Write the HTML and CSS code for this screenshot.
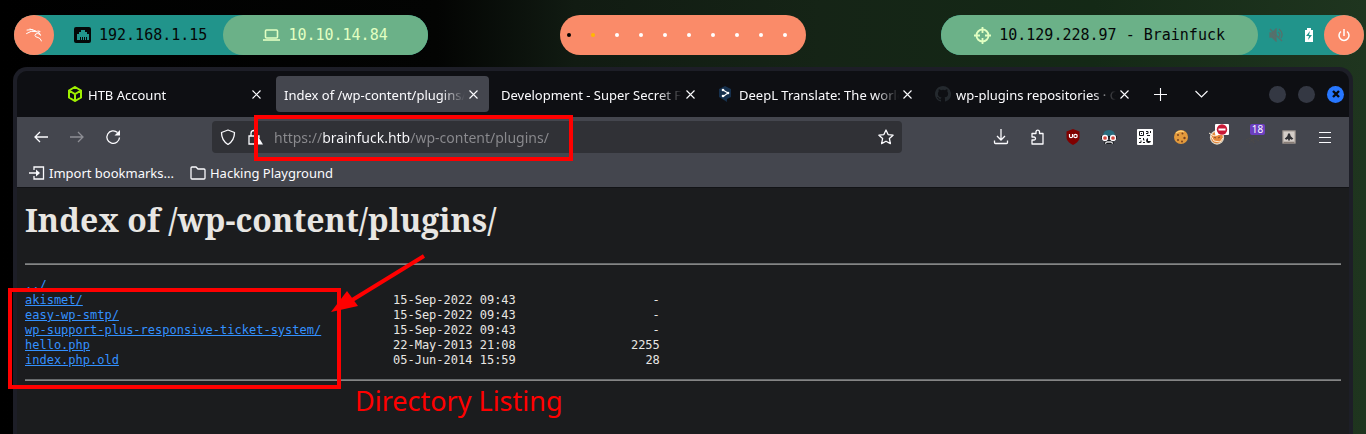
FILE: index.html
```html
<!DOCTYPE html>
<html lang="en">
<head>
<meta charset="utf-8">
<title>Index of /wp-content/plugins/</title>
<link rel="stylesheet" href="styles.css">
</head>
<body>
<header class="panel">
  <div class="group group-left">
    <button class="round" aria-label="Menu"><svg width="16" height="14" viewBox="0 0 16 14" fill="none" stroke="#fff" stroke-linecap="round"><path d="M1 2q5-1.500 9 1M.5 5.500Q5 2 10 3.500M4 1l3 1M10 3.500q4 0 4.500 3.500M14.500 7q-1.500-1.500-3-1.500-2.500 0-2.500 2 0 1.500 3 2 2.500.5 3.500 3.500M12 3l2 .5"/></svg></button>
    <span class="net"><svg width="17" height="16" viewBox="0 0 17 16"><rect width="17" height="16" rx="2" fill="#050808"/><path d="M3 13V7h2V5h2V3h4v2h2v2h2v6h-2v-3h-1v3h-1v-3h-1v3H9v-3H8v3H7v-3H6v3z" fill="#21948b"/></svg>192.168.1.15</span>
    <span class="pill vpn"><svg width="17" height="12" viewBox="0 0 17 12" fill="none" stroke="#e2ffc2" stroke-width="1.600"><rect x="2.500" y="1" width="12" height="8" rx="1"/><path d="M0 11h17"/></svg>10.10.14.84</span>
  </div>
  <div class="spaces"><i class="dot current"></i><i class="dot used"></i><i class="dot"></i><i class="dot"></i><i class="dot"></i><i class="dot"></i><i class="dot"></i><i class="dot"></i><i class="dot"></i><i class="dot"></i></div>
  <div class="group group-right">
    <span class="pill target"><svg width="17" height="17" viewBox="0 0 17 17" fill="none" stroke="#e2ffc2" stroke-width="1.800"><circle cx="8.500" cy="8.500" r="6"/><path d="M8.500 0v6M8.500 11v6M0 8.500h6M11 8.500h6"/></svg>10.129.228.97 - Brainfuck</span>
    <span class="status">
      <svg width="14" height="14" viewBox="0 0 14 14" fill="none" stroke="#55706c" stroke-width="1.300"><path d="M1 5h2l4-4v12L3 9H1z" fill="#55706c"/><path d="M1 1l12 12M9 4q3 2 1 5M10 1q5 4 2 9"/></svg>
      <svg width="8" height="14" viewBox="0 0 8 14"><path d="M0 2h2V0h4v2h2v12H0z" fill="#fff"/><path d="M5 3L1 8h3l-1 4 4-5H4z" fill="#21948b"/></svg>
    </span>
    <button class="round" aria-label="Power"><svg width="12" height="13" viewBox="0 0 12 13" fill="none" stroke="#fff" stroke-width="1.500"><path d="M6 0v7M3 2.500a5 5 0 1 0 6 0"/></svg></button>
  </div>
</header>

<main class="window">
  <div class="titlebar">
    <div class="tabs" role="tablist">
      <div class="tab"><svg class="fav" viewBox="0 0 16 16"><path d="M8 1l6 3.500v7L8 15l-6-3.500v-7zM2 4.500L8 8l6-3.500M8 8v7"/></svg><button class="name" role="tab">HTB Account</button><button class="close" aria-label="Close tab"><svg width="9" height="9" viewBox="0 0 9 9"><path d="M.5.5l8 8M8.500.5l-8 8"/></svg></button></div>
      <div class="tab active"><button class="name" role="tab" aria-selected="true">Index of /wp-content/plugins/</button><button class="close" aria-label="Close tab"><svg width="9" height="9" viewBox="0 0 9 9"><path d="M.5.5l8 8M8.500.5l-8 8"/></svg></button></div>
      <div class="tab"><button class="name" role="tab">Development - Super Secret Forum</button><button class="close" aria-label="Close tab"><svg width="9" height="9" viewBox="0 0 9 9"><path d="M.5.5l8 8M8.500.5l-8 8"/></svg></button></div>
      <div class="tab"><svg class="fav" viewBox="0 0 16 16"><path d="M7 0l6 3v8l-4 2v3l-3-2-5-3V3z" fill="#16304d"/><path d="M5 4l5 3-5 3.500" fill="none" stroke="#fff"/><g fill="#fff"><circle cx="5" cy="4" r="1.300"/><circle cx="10" cy="7" r="1.300"/><circle cx="5" cy="10" r="1.300"/></g></svg><button class="name" role="tab">DeepL Translate: The world's most</button><button class="close" aria-label="Close tab"><svg width="9" height="9" viewBox="0 0 9 9"><path d="M.5.5l8 8M8.500.5l-8 8"/></svg></button></div>
      <div class="tab"><svg class="fav" viewBox="0 0 16 16"><path fill="#24292e" d="M8 0C3.580 0 0 3.580 0 8c0 3.540 2.290 6.530 5.470 7.590.4.070.55-.17.55-.38v-1.490c-2.010.37-2.530-.49-2.690-.94-.09-.23-.48-.94-.82-1.130-.28-.15-.68-.52-.01-.53.63-.01 1.080.58 1.230.82.72 1.210 1.870.87 2.330.66.07-.52.28-.87.51-1.070-1.780-.2-3.640-.89-3.640-3.950 0-.87.31-1.590.82-2.150-.08-.2-.36-1.020.08-2.120 0 0 .67-.21 2.200.82a7.400 7.400 0 0 1 4 0c1.530-1.040 2.200-.82 2.200-.82.44 1.100.16 1.920.08 2.120.51.56.82 1.270.82 2.150 0 3.070-1.870 3.750-3.650 3.950.29.25.54.73.54 1.480v2.200c0 .21.15.46.55.38A8 8 0 0 0 8 0z"/></svg><button class="name" role="tab">wp-plugins repositories · GitHub</button><button class="close" aria-label="Close tab"><svg width="9" height="9" viewBox="0 0 9 9"><path d="M.5.5l8 8M8.500.5l-8 8"/></svg></button></div>
    </div>
    <button class="strip-btn" aria-label="New tab"><svg width="13" height="13" viewBox="0 0 13 13"><path d="M6.500 0v13M0 6.500h13"/></svg></button>
    <button class="strip-btn" aria-label="List all tabs"><svg width="13" height="8" viewBox="0 0 13 8"><path d="M.5 1l6 6 6-6"/></svg></button>
    <div class="controls">
      <button class="ctl" aria-label="Minimize"></button><button class="ctl" aria-label="Maximize"></button><button class="ctl quit" aria-label="Close window"><svg width="8" height="8" viewBox="0 0 8 8"><path d="M1 1l6 6M7 1L1 7" stroke="#090a0d" stroke-width="2.400"/></svg></button>
    </div>
  </div>

  <nav class="toolbar">
    <div class="nav-buttons">
      <button class="tool" aria-label="Back"><svg viewBox="0 0 16 16"><path d="M15 8H2M7 3L2 8l5 5"/></svg></button>
      <button class="tool dim" aria-label="Forward"><svg viewBox="0 0 16 16"><path d="M1 8h13M9 3l5 5-5 5"/></svg></button>
      <button class="tool" aria-label="Reload"><svg viewBox="0 0 16 16"><path d="M12.500 3.500a6.300 6.300 0 1 0 2 5"/><path d="M15 1v5.500H9.500z" fill="#fbfbfe" stroke="none"/></svg></button>
    </div>
    <div class="address">
      <svg viewBox="0 0 16 16"><path d="M8 1l6.500 2.500C14.500 9 12 13 8 15.500 4 13 1.500 9 1.500 3.500z" stroke-linejoin="round"/></svg>
      <svg class="lock" viewBox="0 0 16 16"><path d="M8 15H2V7h10v2M4 7V4.500a3 3 0 0 1 6 0V7"/><path d="M11.500 8L16 15.500H7z" fill="#fbfbfe" stroke="none"/></svg>
      <input class="url" type="text" aria-label="Address" value="https://brainfuck.htb/wp-content/plugins/">
      <button class="star" aria-label="Bookmark this page"><svg viewBox="0 0 16 16"><path d="M8 1l2.100 4.600 5 .6-3.700 3.400 1 5L8 12.200l-4.400 2.400 1-5L.9 6.200l5-.6z" stroke-linejoin="round"/></svg></button>
    </div>
    <div class="extensions">
      <button class="tool" aria-label="Downloads"><svg viewBox="0 0 16 16"><path d="M8 0v11M4 7l4 4 4-4M1.500 11.500v2q0 1 1 1h11q1 0 1-1v-2"/></svg></button>
      <button class="tool" aria-label="Extensions"><svg viewBox="0 0 16 16"><path d="M3 4.500h4v-2a1.800 1.800 0 0 1 3.500 0v2H14V15H3v-4h2a1.500 1.500 0 0 0 0-3H3z" stroke-linejoin="round"/></svg></button>
      <button class="tool" aria-label="uBlock Origin"><svg viewBox="0 0 16 16"><path d="M8 0l6.500 2.500V8c0 4-3 6-6.500 8-3.500-2-6.500-4-6.500-8V2.500z" fill="#800000" stroke="none"/><path d="M4.500 5v2.500q0 1.200 1.500 1.200T7.500 7.500V5" stroke-width="1.200"/><circle cx="10.500" cy="7" r="1.700" stroke-width="1.200"/></svg></button>
      <button class="tool" aria-label="Privacy goggles"><svg viewBox="0 0 16 16"><path d="M2 7q0-6 6-6t6 6z" fill="#286b7d" stroke="none"/><path d="M0 7h16v3H0z" fill="#17191d" stroke="none"/><path d="M3 11h10v4H3z" fill="#17191d" stroke="none"/><circle cx="4" cy="9" r="2.500" fill="#d44a40" stroke-width="1.300"/><circle cx="12" cy="9" r="2.500" fill="#d44a40" stroke-width="1.300"/><path d="M4 14.500l2-1.500h4l2 1.500" stroke="#d9d9dc"/></svg></button>
      <button class="tool" aria-label="QR code"><svg viewBox="0 0 16 16"><rect width="16" height="16" rx="1" fill="#fff" stroke="none"/><path d="M2.500 2.500h4v4h-4zM4 4.500h1M9 2.500h2v2H9M13.500 2v2M10 6.500h3M2 9.500h2M2 13.500h2v-2M6.500 9v2h1M6 13.500h2" stroke="#17191c" stroke-width="1"/><path d="M11 9a2.500 2.500 0 1 0 3 3h-3z" fill="#17191c" stroke="none"/></svg></button>
      <button class="tool" aria-label="Cookie editor"><svg viewBox="0 0 16 16"><circle cx="8" cy="8" r="7" fill="#e39a3c" stroke="none"/><path d="M3 4q4-3 8-1" stroke="#ffd178"/><g fill="#7a431d" stroke="none"><circle cx="5" cy="6" r="1"/><circle cx="9.500" cy="4.500" r="1"/><circle cx="11.500" cy="9" r="1.200"/><circle cx="5" cy="11" r="1"/><circle cx="9" cy="12.500" r="1"/></g></svg></button>
      <button class="tool" aria-label="FoxyProxy"><svg viewBox="0 0 16 16"><circle cx="8" cy="8.500" r="6.500" fill="#e6883b" stroke="#ddd7c8"/><path d="M0 4l5 3 4-1M2 7l3 5 6 1 3-4" stroke="#fff0da" stroke-width="1"/><path d="M5 8l2 1M9 9l2-1" stroke="#8b4824" stroke-width="1"/></svg><svg class="badge" viewBox="0 0 14 11"><rect width="14" height="11" rx="1" fill="#fff" stroke="none"/><circle cx="7" cy="5.500" r="5.200" fill="#c91936" stroke="none"/><path d="M3.500 5.500h7" stroke="#fff" stroke-width="2"/></svg></button>
      <button class="tool" aria-label="Wappalyzer"><svg viewBox="0 0 16 16"><path d="M1 11l3-2 3 3 3-3 4 3M4 14l3-3 3 4" stroke="#4b4949" stroke-dasharray="2 1"/></svg><span class="badge count">18</span></button>
      <button class="tool" aria-label="User agent"><svg class="small" viewBox="0 0 16 16"><rect x="1" y="1" width="14" height="14" fill="#d4cdc8" stroke="#9a918b"/><path d="M7 4h2l1 3 3 3-2 1-2-1v2H7v-2l-2 1-2-1 3-3z" fill="#303034" stroke="none"/><path d="M2 14h12" stroke="#776b64"/></svg></button>
      <button class="tool" aria-label="Application menu"><svg viewBox="0 0 16 16"><path d="M2 3.500h12M2 8.500h12M2 13.500h12" stroke-width="1"/></svg></button>
    </div>
  </nav>

  <nav class="bookmarks">
    <a class="mark" href="#import"><svg viewBox="0 0 16 16"><path d="M5 5V2h9.500v12H5v-3M0 8h9"/><path d="M7 4.500L11 8l-4 3.500z" fill="#fbfbfe" stroke="none"/></svg>Import bookmarks...</a>
    <a class="mark" href="#playground"><svg viewBox="0 0 16 16"><path d="M1 13V3q0-1 1-1h4l2 2h6q1 0 1 1v8q0 1-1 1H2q-1 0-1-1z"/></svg>Hacking Playground</a>
  </nav>

  <section class="page">
    <h1 class="heading">Index of /wp-content/plugins/</h1>
    <hr class="rule">
    <table class="listing">
      <tr><td class="file"><a href="../">../</a></td><td></td><td class="size"></td></tr>
      <tr><td class="file"><a href="akismet/">akismet/</a></td><td>15-Sep-2022 09:43</td><td class="size">-</td></tr>
      <tr><td class="file"><a href="easy-wp-smtp/">easy-wp-smtp/</a></td><td>15-Sep-2022 09:43</td><td class="size">-</td></tr>
      <tr><td class="file"><a href="wp-support-plus-responsive-ticket-system/">wp-support-plus-responsive-ticket-system/</a></td><td>15-Sep-2022 09:43</td><td class="size">-</td></tr>
      <tr><td class="file"><a href="hello.php">hello.php</a></td><td>22-May-2013 21:08</td><td class="size">2255</td></tr>
      <tr><td class="file"><a href="index.php.old">index.php.old</a></td><td>05-Jun-2014 15:59</td><td class="size">28</td></tr>
    </table>
    <hr class="rule">
  </section>
</main>

<div class="outline outline-url"></div>
<div class="outline outline-files"></div>
<svg class="arrow" width="96" height="60" viewBox="0 0 96 60"><path d="M93 2L18 48" stroke="#f00" stroke-width="4"/><path d="M0 58L16 37l11 15z" fill="#f00"/></svg>
<p class="caption">Directory Listing</p>
</body>
</html>
```
FILE: styles.css
```css
* { box-sizing: border-box; }
body {
  margin: 0;
  height: 100vh;
  overflow: hidden;
  display: flex;
  flex-direction: column;
  position: relative;
  background: linear-gradient(90deg, #000 0, #030403 32%, #111b12 42%, #152416 60%, #142916 80%, #1f351f 100%);
  color: #fbfbfe;
  font-family: "Noto Sans", sans-serif;
  font-size: 13px;
}
button { border: 0; padding: 0; margin: 0; background: none; color: inherit; font: inherit; }
svg { display: block; flex: none; }

.panel {
  display: grid;
  grid-template-columns: 1fr 246px 1fr;
  padding: 15px 2px 12px;
  font-family: "DejaVu Sans Mono", monospace;
  font-size: 15px;
  color: #050808;
}
.group { display: flex; height: 40px; border-radius: 20px; background: #21948b; white-space: pre; }
.group-left { justify-self: start; margin-left: 12px; }
.group-right { justify-self: end; }
.round { width: 40px; height: 40px; border-radius: 20px; background: #fa8b69; display: grid; place-items: center; }
.net { display: flex; align-items: center; gap: 8px; padding: 0 16px 0 20px; }
.pill { display: flex; align-items: center; gap: 8px; border-radius: 20px; background: #6bb188; }
.vpn { padding: 0 40px; color: #e2ffc2; }
.target { padding: 0 33px; }
.status { display: flex; align-items: center; gap: 22px; padding: 0 11px; }
.spaces { display: flex; align-items: center; gap: 20px; height: 40px; padding-left: 7px; border-radius: 20px; background: #fa8b69; }
.dot { width: 4px; height: 4px; border-radius: 2px; background: #fff; }
.current { background: #000; }
.used { background: #ffb900; }

.window {
  flex: 1;
  display: flex;
  flex-direction: column;
  margin: 0 13px;
  border: 4px solid #1d1e27;
  border-bottom: 0;
  border-radius: 14px 14px 0 0;
  background: #1b1c1e;
  overflow: hidden;
}
.titlebar { display: flex; align-items: center; height: 46px; padding-left: 42px; background: #0e0f13; }
.titlebar svg { fill: none; stroke: #fbfbfe; stroke-width: 1.1; }
.titlebar .fav { width: 16px; height: 16px; margin-right: 5px; stroke: none; }
.titlebar .tab:first-child .fav { stroke: #9fef00; stroke-width: 2; }
.tabs { flex: 0 1 1081px; display: grid; grid-template-columns: repeat(5, 1fr); gap: 4px; }
.tab { display: flex; align-items: center; min-width: 0; height: 36px; padding: 0 8px; border-radius: 4px; }
.active { background: #44464e; }
.name {
  flex: 1;
  min-width: 0;
  overflow: hidden;
  white-space: nowrap;
  text-align: left;
  line-height: 20px;
  padding-top: 2px;
  -webkit-mask-image: linear-gradient(90deg, #000 calc(100% - 24px), transparent);
  mask-image: linear-gradient(90deg, #000 calc(100% - 24px), transparent);
}
.close { width: 16px; height: 16px; display: grid; place-items: center; }
.strip-btn { width: 41px; height: 36px; display: grid; place-items: center; }
.controls { display: flex; gap: 12px; margin-left: auto; padding-right: 5px; }
.ctl { width: 17px; height: 17px; border-radius: 50%; background: #343843; display: grid; place-items: center; }
.quit { background: #2777ff; }

.toolbar { display: flex; align-items: center; height: 40px; padding: 0 6px; background: #44464e; }
.toolbar svg, .bookmarks svg { width: 16px; height: 16px; fill: none; stroke: #fbfbfe; stroke-width: 1.3; }
.nav-buttons, .extensions { display: flex; flex: none; }
.tool { position: relative; width: 36px; height: 36px; display: grid; place-items: center; }
.toolbar .small { width: 14px; height: 14px; }
.dim { opacity: .4; }
.address {
  display: flex;
  align-items: center;
  flex: 1;
  min-width: 0;
  height: 32px;
  margin: 0 81px;
  padding: 0 8px;
  border-radius: 4px;
  background: #303136;
}
.address .lock { margin: 0 11px; }
.url {
  flex: 1;
  min-width: 0;
  border: 0;
  padding: 0;
  outline: 0;
  font: 14px "Noto Sans", sans-serif;
  color: transparent;
  background: linear-gradient(90deg, #8b8b8f 49px, #fbfbfe 49px, #fbfbfe 136px, #8b8b8f 136px);
  -webkit-background-clip: text;
  background-clip: text;
}
.toolbar .badge { position: absolute; top: 5px; right: 6px; width: 14px; height: 11px; }
.toolbar .count { width: 15px; height: 11px; border-radius: 2px; background: #6b3fc0; font-size: 10px; line-height: 11px; }

.bookmarks { display: flex; align-items: center; gap: 16px; height: 31px; padding: 2px 12px 0; background: #44464e; border-bottom: 1px solid #121316; }
.mark { display: flex; align-items: center; gap: 4px; color: inherit; text-decoration: none; }

.page { padding: 8px; color: #e8e6e3; }
.heading { margin: 0 0 20px; font-family: "Noto Serif", "DejaVu Serif Condensed", serif; font-size: 32px; line-height: 47px; }
.rule { height: 2px; margin: 0; border: 0; border-top: 1px solid #66696b; background: #858585; }
.listing { margin: 13px 0 11px; border-collapse: collapse; font: 12px/15px "DejaVu Sans Mono", monospace; }
.listing td { padding: 0; height: 15px; }
.listing a { color: #3391ff; }
.file { width: 368px; }
.size { width: 144px; text-align: right; }

.outline { position: absolute; border: 4px solid #f00; pointer-events: none; }
.outline-url { left: 254px; top: 115px; width: 319px; height: 46px; }
.outline-files { left: 8px; top: 288px; width: 333px; height: 101px; }
.arrow { position: absolute; left: 331px; top: 254px; }
.caption { position: absolute; left: 355px; top: 383px; margin: 0; color: #f00; font-size: 27px; line-height: 36px; }
```
